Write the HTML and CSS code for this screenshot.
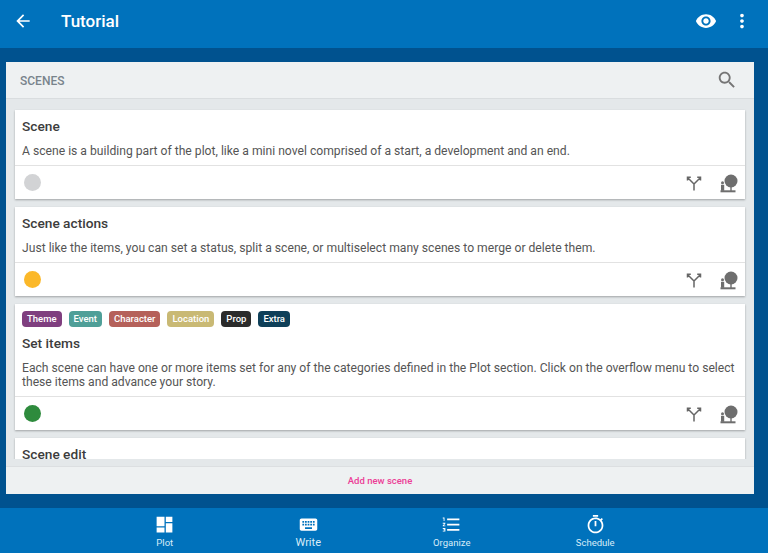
FILE: index.html
```html
<!DOCTYPE html>
<html lang="en">
<head>
<meta charset="UTF-8" />
<meta name="viewport" content="width=device-width, initial-scale=1" />
<title>Tutorial</title>
<link rel="stylesheet" href="styles.css">
</head>
<body>

<header class="app-bar">
  <svg class="back-icon" viewBox="0 0 24 24"><path d="M20 11H7.83l5.59-5.59L12 4l-8 8 8 8 1.41-1.41L7.83 13H20v-2z"/></svg>
  <h1 class="app-title">Tutorial</h1>
  <svg class="eye-icon" viewBox="0 0 24 24"><path d="M12 4.5C7 4.5 2.73 7.61 1 12c1.73 4.39 6 7.5 11 7.5s9.27-3.11 11-7.5c-1.73-4.39-6-7.5-11-7.5zM12 17c-2.76 0-5-2.24-5-5s2.24-5 5-5 5 2.24 5 5-2.24 5-5 5zm0-8c-1.66 0-3 1.34-3 3s1.34 3 3 3 3-1.34 3-3-1.34-3-3-3z"/></svg>
  <svg class="more-icon" viewBox="0 0 24 24"><path d="M12 8c1.1 0 2-.9 2-2s-.9-2-2-2-2 .9-2 2 .9 2 2 2zm0 2c-1.1 0-2 .9-2 2s.9 2 2 2 2-.9 2-2-.9-2-2-2zm0 6c-1.1 0-2 .9-2 2s.9 2 2 2 2-.9 2-2-.9-2-2-2z"/></svg>
</header>

<main class="content">
  <section class="panel">
    <div class="panel-head">
      <span class="panel-title">SCENES</span>
      <svg class="search-icon" viewBox="0 0 24 24"><path d="M15.5 14h-.79l-.28-.27C15.41 12.59 16 11.11 16 9.5 16 5.91 13.09 3 9.5 3S3 5.91 3 9.5 5.91 16 9.5 16c1.61 0 3.09-.59 4.23-1.57l.27.28v.79l5 4.99L20.49 19l-4.99-5zm-6 0C7.01 14 5 11.99 5 9.5S7.01 5 9.5 5 14 7.01 14 9.5 11.99 14 9.5 14z"/></svg>
    </div>

    <div class="scene-list">
      <article class="card">
        <div class="card-body">
          <h2 class="card-title">Scene</h2>
          <p class="card-text">A scene is a building part of the plot, like a mini novel comprised of a start, a development and an end.</p>
        </div>
        <div class="card-foot">
          <span class="status status-grey"></span>
          <svg class="split-icon" viewBox="0 0 20 20"><path d="M10 17.500V11L4 5M10 11L16 5M3.500 7.500V4.200h3.300M16.500 7.500V4.200h-3.300"/></svg>
          <svg class="item-icon" viewBox="0 0 20 20"><circle cx="12" cy="8" r="6.500"/><rect x="11.300" y="12" width="1.400" height="6"/><rect x="1.500" y="17.300" width="15" height="2"/><circle cx="3.500" cy="9.800" r="1.500"/><rect x="2" y="11.800" width="3.200" height="6"/></svg>
        </div>
      </article>

      <article class="card">
        <div class="card-body">
          <h2 class="card-title">Scene actions</h2>
          <p class="card-text">Just like the items, you can set a status, split a scene, or multiselect many scenes to merge or delete them.</p>
        </div>
        <div class="card-foot">
          <span class="status status-yellow"></span>
          <svg class="split-icon" viewBox="0 0 20 20"><path d="M10 17.500V11L4 5M10 11L16 5M3.500 7.500V4.200h3.300M16.500 7.500V4.200h-3.300"/></svg>
          <svg class="item-icon" viewBox="0 0 20 20"><circle cx="12" cy="8" r="6.500"/><rect x="11.300" y="12" width="1.400" height="6"/><rect x="1.500" y="17.300" width="15" height="2"/><circle cx="3.500" cy="9.800" r="1.500"/><rect x="2" y="11.800" width="3.200" height="6"/></svg>
        </div>
      </article>

      <article class="card">
        <div class="tags">
          <span class="tag tag-theme">Theme</span>
          <span class="tag tag-event">Event</span>
          <span class="tag tag-character">Character</span>
          <span class="tag tag-location">Location</span>
          <span class="tag tag-prop">Prop</span>
          <span class="tag tag-extra">Extra</span>
        </div>
        <div class="card-body card-body-tagged">
          <h2 class="card-title">Set items</h2>
          <p class="card-text">Each scene can have one or more items set for any of the categories defined in the Plot section. Click on the overflow menu to select these items and advance your story.</p>
        </div>
        <div class="card-foot">
          <span class="status status-green"></span>
          <svg class="split-icon" viewBox="0 0 20 20"><path d="M10 17.500V11L4 5M10 11L16 5M3.500 7.500V4.200h3.300M16.500 7.500V4.200h-3.300"/></svg>
          <svg class="item-icon" viewBox="0 0 20 20"><circle cx="12" cy="8" r="6.500"/><rect x="11.300" y="12" width="1.400" height="6"/><rect x="1.500" y="17.300" width="15" height="2"/><circle cx="3.500" cy="9.800" r="1.500"/><rect x="2" y="11.800" width="3.200" height="6"/></svg>
        </div>
      </article>

      <article class="card">
        <div class="card-body">
          <h2 class="card-title">Scene edit</h2>
        </div>
      </article>
    </div>

    <div class="panel-foot">Add new scene</div>
  </section>
</main>

<nav class="bottom-nav">
  <div class="nav-item">
    <svg class="nav-icon" viewBox="0 0 24 24"><path d="M3 3h9v11H3zM13.500 3H21v6h-7.500zM13.500 10.500H21V21h-7.500zM3 15.500h9V21H3z"/></svg>
    <span class="nav-label">Plot</span>
  </div>
  <div class="nav-item">
    <svg class="nav-icon" viewBox="0 0 24 24"><path d="M20 5H4c-1.100 0-2 .9-2 2v10c0 1.100.9 2 2 2h16c1.100 0 2-.9 2-2V7c0-1.100-.9-2-2-2zm-9 3h2v2h-2V8zm0 3h2v2h-2v-2zM8 8h2v2H8V8zm0 3h2v2H8v-2zm-1 2H5v-2h2v2zm0-3H5V8h2v2zm9 7H8v-2h8v2zm0-4h-2v-2h2v2zm0-3h-2V8h2v2zm3 3h-2v-2h2v2zm0-3h-2V8h2v2z"/></svg>
    <span class="nav-label nav-label-large">Write</span>
  </div>
  <div class="nav-item">
    <svg class="nav-icon" viewBox="0 0 24 24"><path d="M2 17h2v.5H3v1h1v.5H2v1h3v-4H2v1zm1-9h1V4H2v1h1v3zm-1 3h1.800L2 13.100v.9h3v-1H3.200L5 10.900V10H2v1zm5-6v2h14V5H7zm0 14h14v-2H7v2zm0-6h14v-2H7v2z"/></svg>
    <span class="nav-label">Organize</span>
  </div>
  <div class="nav-item">
    <svg class="nav-icon" viewBox="0 0 24 24"><path d="M15 1H9v2h6V1zm-4 13h2V8h-2v6zm8.030-6.610l1.420-1.420c-.43-.51-.9-.99-1.410-1.410l-1.420 1.420C16.070 4.740 14.120 4 12 4c-4.970 0-9 4.030-9 9s4.020 9 9 9 9-4.030 9-9c0-2.120-.74-4.070-1.970-5.610zM12 20c-3.870 0-7-3.130-7-7s3.130-7 7-7 7 3.130 7 7-3.130 7-7 7z"/></svg>
    <span class="nav-label">Schedule</span>
  </div>
</nav>

</body>
</html>
```

FILE: styles.css
```css
body {
  margin: 0;
  height: 553px;
  overflow: hidden;
  font-family: Roboto, "Liberation Sans", sans-serif;
  background: #00528f;
  display: flex;
  flex-direction: column;
}
.app-bar {
  height: 41px;
  padding-bottom: 7px;
  flex: none;
  background: #0072bc;
  display: flex;
  align-items: center;
  color: #fff;
}
.back-icon {
  width: 20px;
  height: 20px;
  margin-left: 13px;
  fill: #fff;
}
.app-title {
  margin: 0 0 0 28px;
  font-size: 17px;
  font-weight: 500;
  flex: 1;
}
.eye-icon {
  width: 22px;
  height: 22px;
  fill: #fff;
  margin-right: 14px;
}
.more-icon {
  width: 22px;
  height: 22px;
  fill: #fff;
  margin-right: 15px;
}
.content {
  flex: 1;
  padding: 14px 14px 14px 6px;
  min-height: 0;
  display: flex;
}
.panel {
  flex: 1;
  background: #e4e8ea;
  display: flex;
  flex-direction: column;
  min-width: 0;
}
.panel-head {
  height: 36px;
  flex: none;
  background: #eef1f2;
  border-bottom: 1px solid #d9dddf;
  display: flex;
  align-items: center;
  justify-content: space-between;
  padding: 0 16px 0 14px;
}
.panel-title {
  font-size: 12px;
  font-weight: 500;
  color: #78848c;
  padding-top: 2px;
}
.search-icon {
  width: 22px;
  height: 22px;
  fill: #757575;
}
.scene-list {
  flex: 1;
  min-height: 0;
  overflow: hidden;
  padding: 11px 9px 0;
  display: flex;
  flex-direction: column;
  gap: 8px;
  border-bottom: 7px solid #e4e8ea;
}
.card {
  flex: none;
  background: #fff;
  box-shadow: 0 1px 2px rgba(0,0,0,0.3);
}
.card-body {
  padding: 7px 7px 7px;
}
.card-body-tagged {
  padding-bottom: 6.5px;
}
.card-title {
  margin: 0;
  font-size: 13.7px;
  line-height: 18px;
  font-weight: 500;
  color: #3c3c3c;
}
.card-text {
  margin: 8.5px 0 0;
  font-size: 12.15px;
  line-height: 14.5px;
  color: #555;
}
.card-foot {
  height: 33px;
  border-top: 1px solid #e2e2e2;
  display: flex;
  align-items: center;
  padding: 0 6px 0 9px;
}
.status {
  width: 17px;
  height: 17px;
  border-radius: 50%;
  margin-right: auto;
}
.status-grey {
  background: #d2d3d5;
}
.status-yellow {
  background: #fbb829;
}
.status-green {
  background: #2e8b3d;
}
.split-icon {
  width: 20px;
  height: 20px;
  fill: none;
  stroke: #666;
  stroke-width: 1.5;
  margin-right: 15px;
}
.item-icon {
  width: 20px;
  height: 20px;
  fill: #6e6e6e;
}
.tags {
  display: flex;
  gap: 7px;
  padding: 7px 7px 0;
}
.tag {
  height: 16px;
  line-height: 16px;
  padding: 0 5px;
  border-radius: 4px;
  font-size: 9.5px;
  font-weight: 500;
  color: #fff;
}
.tag-theme {
  background: #7f3f7f;
}
.tag-event {
  background: #4f9f98;
}
.tag-character {
  background: #b5615a;
}
.tag-location {
  background: #c9b974;
}
.tag-prop {
  background: #2b2b2b;
}
.tag-extra {
  background: #0e3f58;
}
.panel-foot {
  height: 27px;
  flex: none;
  background: #eef1f2;
  border-top: 1px solid #dcdfe1;
  display: flex;
  align-items: center;
  justify-content: center;
  font-size: 9.5px;
  font-weight: 500;
  color: #ec3e96;
}
.bottom-nav {
  height: 45px;
  flex: none;
  background: #0072bc;
  display: flex;
  padding-left: 93px;
}
.nav-item {
  width: 143.5px;
  flex: none;
  display: flex;
  flex-direction: column;
  align-items: center;
  color: #d8ecf8;
  padding-top: 6px;
}
.nav-icon {
  width: 21px;
  height: 21px;
  fill: #fff;
}
.nav-label {
  font-size: 9.5px;
  line-height: 11px;
  margin-top: 2px;
}
.nav-label-large {
  font-size: 11px;
}
```
